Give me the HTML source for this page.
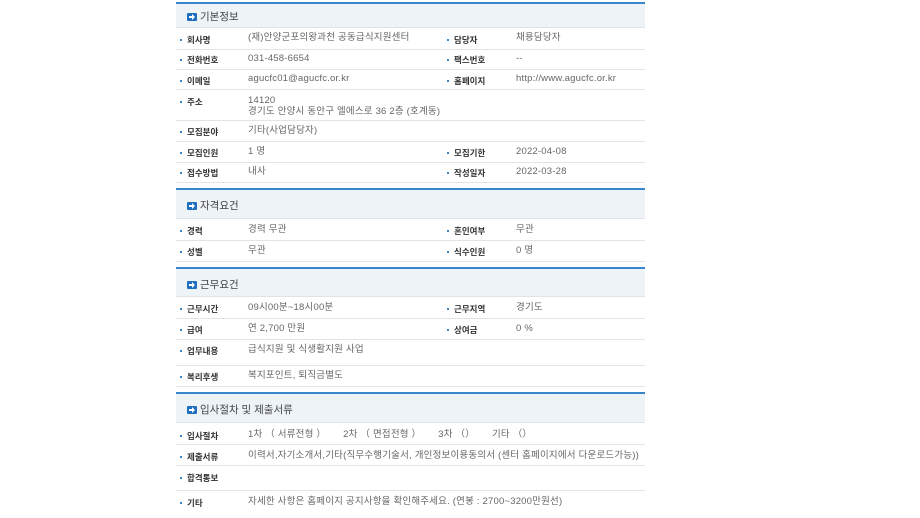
<!DOCTYPE html>
<html><head><meta charset="utf-8"><style>
body{margin:0;width:920px;height:518px;background:#fff;position:relative;overflow:hidden;font-family:"Liberation Sans","Noto Sans CJK KR",sans-serif;}
.h{position:absolute;left:176px;width:469px;background:#eef3f8;border-top:2px solid #3a86cc;border-bottom:1px solid #e0e4e8;box-sizing:border-box;}
.h span{position:absolute;left:11px;font-size:10.5px;color:#444;line-height:12px;}
.h i{display:inline-block;width:10px;height:8px;background:#1f6fbf;border-radius:1px;margin-right:3px;vertical-align:-1px;position:relative;}
.h i:after{content:"";position:absolute;left:2px;top:3px;width:4px;height:2px;background:#fff;}
.h i:before{content:"";position:absolute;left:5px;top:1px;border-left:3px solid #fff;border-top:3px solid transparent;border-bottom:3px solid transparent;}
.ln{position:absolute;left:176px;width:469px;height:1px;background:#e4e4e4;}
.t{position:absolute;font-size:8.5px;white-space:nowrap;line-height:11px;}
.l{color:#333;font-weight:bold;}
.l:before{content:"";display:inline-block;width:2px;height:2px;background:#3a86cc;margin-right:5px;vertical-align:2px;}
.v{color:#666;font-size:9.5px;letter-spacing:0.2px;}
</style></head><body>
<div class="h" style="top:2px;height:26px"><span style="top:7px"><i></i>기본정보</span></div>
<div class="h" style="top:188px;height:31px"><span style="top:10px"><i></i>자격요건</span></div>
<div class="h" style="top:267px;height:30px"><span style="top:10px"><i></i>근무요건</span></div>
<div class="h" style="top:392px;height:31px"><span style="top:10px"><i></i>입사절차 및 제출서류</span></div>

<div class="ln" style="top:49px"></div><div class="ln" style="top:69px"></div><div class="ln" style="top:89px"></div><div class="ln" style="top:120px"></div><div class="ln" style="top:141px"></div><div class="ln" style="top:162px"></div><div class="ln" style="top:182px"></div>
<div class="ln" style="top:240px"></div><div class="ln" style="top:261px"></div>
<div class="ln" style="top:318px"></div><div class="ln" style="top:339px"></div><div class="ln" style="top:365px"></div><div class="ln" style="top:386px"></div>
<div class="ln" style="top:444px"></div><div class="ln" style="top:465px"></div><div class="ln" style="top:490px"></div>

<div class="t l" style="left:180px;top:35px">회사명</div><div class="t v" style="left:248px;top:32px">(재)안양군포의왕과천 공동급식지원센터</div>
<div class="t l" style="left:447px;top:35px">담당자</div><div class="t v" style="left:516px;top:32px">채용담당자</div>
<div class="t l" style="left:180px;top:55px">전화번호</div><div class="t v" style="left:248px;top:53px">031-458-6654</div>
<div class="t l" style="left:447px;top:55px">팩스번호</div><div class="t v" style="left:516px;top:53px">--</div>
<div class="t l" style="left:180px;top:76px">이메일</div><div class="t v" style="left:248px;top:73px">agucfc01@agucfc.or.kr</div>
<div class="t l" style="left:447px;top:76px">홈페이지</div><div class="t v" style="left:516px;top:73px">http://www.agucfc.or.kr</div>
<div class="t l" style="left:180px;top:97px">주소</div><div class="t v" style="left:248px;top:95px;line-height:11px">14120<br>경기도 안양시 동안구 엘에스로 36 2층 (호계동)</div>
<div class="t l" style="left:180px;top:127px">모집분야</div><div class="t v" style="left:248px;top:125px">기타(사업담당자)</div>
<div class="t l" style="left:180px;top:148px">모집인원</div><div class="t v" style="left:248px;top:146px">1 명</div>
<div class="t l" style="left:447px;top:148px">모집기한</div><div class="t v" style="left:516px;top:146px">2022-04-08</div>
<div class="t l" style="left:180px;top:168px">접수방법</div><div class="t v" style="left:248px;top:166px">내사</div>
<div class="t l" style="left:447px;top:168px">작성일자</div><div class="t v" style="left:516px;top:166px">2022-03-28</div>

<div class="t l" style="left:180px;top:226px">경력</div><div class="t v" style="left:248px;top:224px">경력 무관</div>
<div class="t l" style="left:447px;top:226px">혼인여부</div><div class="t v" style="left:516px;top:224px">무관</div>
<div class="t l" style="left:180px;top:247px">성별</div><div class="t v" style="left:248px;top:245px">무관</div>
<div class="t l" style="left:447px;top:247px">식수인원</div><div class="t v" style="left:516px;top:245px">0 명</div>

<div class="t l" style="left:180px;top:304px">근무시간</div><div class="t v" style="left:248px;top:302px">09시00분~18시00분</div>
<div class="t l" style="left:447px;top:304px">근무지역</div><div class="t v" style="left:516px;top:302px">경기도</div>
<div class="t l" style="left:180px;top:325px">급여</div><div class="t v" style="left:248px;top:323px">연 2,700 만원</div>
<div class="t l" style="left:447px;top:325px">상여금</div><div class="t v" style="left:516px;top:323px">0 %</div>
<div class="t l" style="left:180px;top:346px">업무내용</div><div class="t v" style="left:248px;top:344px">급식지원 및 식생활지원 사업</div>
<div class="t l" style="left:180px;top:372px">복리후생</div><div class="t v" style="left:248px;top:370px">복지포인트, 퇴직금별도</div>

<div class="t l" style="left:180px;top:431px">입사절차</div><div class="t v" style="left:248px;top:429px">1차 （ 서류전형 ）&nbsp;&nbsp;&nbsp;&nbsp;&nbsp;&nbsp;2차 （ 면접전형 ）&nbsp;&nbsp;&nbsp;&nbsp;&nbsp;&nbsp;3차 （）&nbsp;&nbsp;&nbsp;&nbsp;&nbsp;&nbsp;기타 （）</div>
<div class="t l" style="left:180px;top:452px">제출서류</div><div class="t v" style="left:248px;top:450px">이력서,자기소개서,기타(직무수행기술서, 개인정보이용동의서 (센터 홈페이지에서 다운로드가능))</div>
<div class="t l" style="left:180px;top:473px">합격통보</div>
<div class="t l" style="left:180px;top:498px">기타</div><div class="t v" style="left:248px;top:496px">자세한 사항은 홈페이지 공지사항을 확인해주세요. (연봉 : 2700~3200만원선)</div>
</body></html>
